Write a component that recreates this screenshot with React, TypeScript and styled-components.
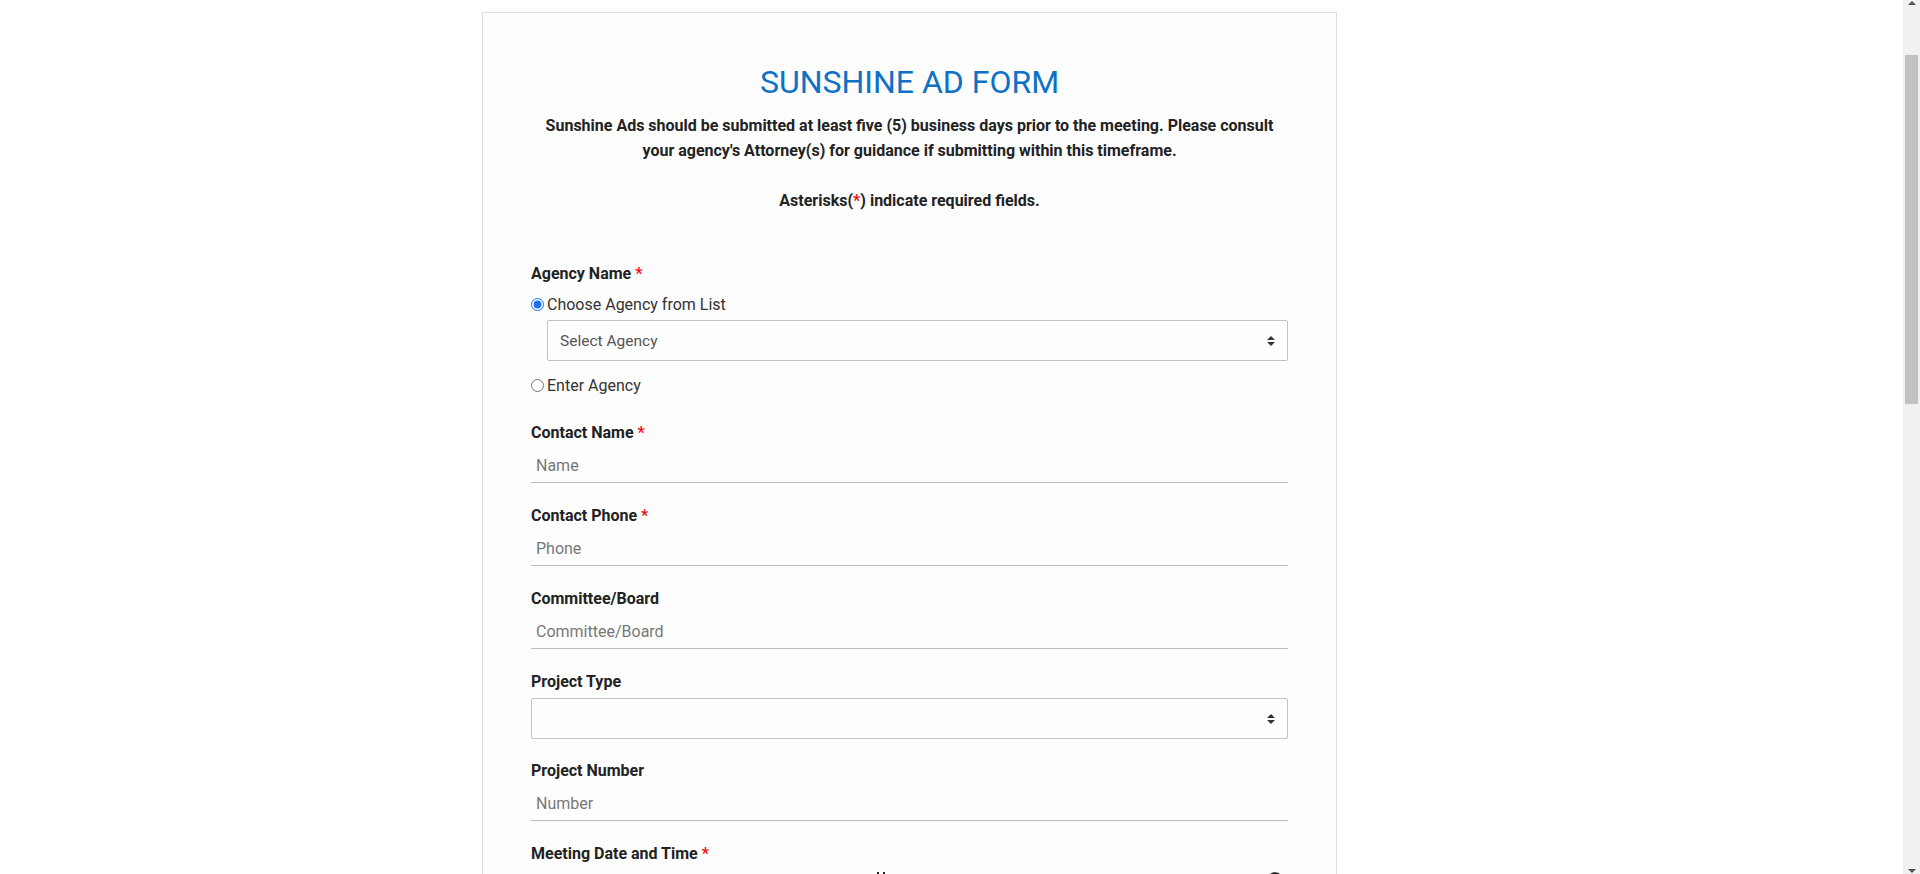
import React from "react";
import styled, { createGlobalStyle } from "styled-components";
import { FaRegCalendarAlt, FaClock } from "react-icons/fa";

const Global = createGlobalStyle`
  html, body { margin: 0; padding: 0; background: #ffffff; }
  body { font-family: Roboto, "Liberation Sans", Arial, sans-serif; color: #222; }
  * { box-sizing: border-box; }
`;

const Page = styled.div`
  display: flex;
  justify-content: center;
  padding: 12px 17px 60px 0;
`;

const Card = styled.div`
  width: 855px;
  margin-right: 84px;
  background: #fdfdfd;
  border: 1px solid #dedee2;
  padding: 50px 48px 48px;
`;

const Title = styled.h1`
  margin: 0;
  font-size: 32px;
  line-height: 38px;
  font-weight: 400;
  color: #0f71c6;
  text-align: center;
`;

const Intro = styled.p`
  margin: 12px 0 0;
  font-size: 16px;
  line-height: 25px;
  font-weight: 700;
  color: #222;
  text-align: center;
`;

const Req = styled.span`
  color: #ee1111;
`;

const Form = styled.form`
  margin-top: 50px;
  display: flex;
  flex-direction: column;
`;

const Group = styled.div<{ $mb?: number }>`
  display: flex;
  flex-direction: column;
  margin-bottom: ${(p) => p.$mb ?? 22}px;
`;

const Label = styled.label<{ $mb?: number }>`
  font-size: 16px;
  font-weight: 700;
  line-height: 21px;
  color: #222;
  margin-bottom: ${(p) => p.$mb ?? 5}px;
`;

const RadioRow = styled.label<{ $mt: number }>`
  display: flex;
  align-items: center;
  height: 24px;
  margin-top: ${(p) => p.$mt}px;
  font-size: 16px;
  color: #333;
  cursor: pointer;
`;

const Radio = styled.input.attrs({ type: "radio" })`
  width: 13px;
  height: 13px;
  margin: 0 3px 0 0;
  accent-color: #1a73e8;
`;

const SelectWrap = styled.div<{ $indent?: number; $mt?: number }>`
  position: relative;
  margin-left: ${(p) => p.$indent ?? 0}px;
  margin-top: ${(p) => p.$mt ?? 0}px;
`;

const Select = styled.select`
  appearance: none;
  -webkit-appearance: none;
  width: 100%;
  height: 41px;
  border: 1px solid #c2c2c2;
  border-radius: 2px;
  background: #fefefe;
  padding: 0 30px 0 12px;
  font-family: Roboto, "Liberation Sans", Arial, sans-serif;
  font-size: 15.5px;
  color: #555;
  outline: none;
`;

const Arrows = styled.svg`
  position: absolute;
  right: 13px;
  top: 50%;
  transform: translateY(-50%);
  pointer-events: none;
`;

const TextInput = styled.input`
  width: 100%;
  height: 35px;
  border: none;
  border-bottom: 1px solid #bdbdbd;
  background: #fefefe;
  padding: 0 5px;
  font-family: Roboto, "Liberation Sans", Arial, sans-serif;
  font-size: 16px;
  color: #333;
  outline: none;
  &::placeholder { color: #777; }
`;

const TextArea = styled.textarea`
  width: 100%;
  height: 160px;
  border: 1px solid #c2c2c2;
  border-radius: 2px;
  background: #fefefe;
  padding: 8px;
  font-family: Roboto, "Liberation Sans", Arial, sans-serif;
  font-size: 16px;
  resize: vertical;
  outline: none;
  &::placeholder { color: #777; }
`;

const Pair = styled.div`
  display: grid;
  grid-template-columns: 1fr 1fr;
  column-gap: 31px;
`;

const IconField = styled.div`
  position: relative;
`;

const FieldIcon = styled.span`
  position: absolute;
  right: 5px;
  top: 3px;
  display: flex;
  color: #222;
  font-size: 16px;
  pointer-events: none;
`;

const Note = styled.p`
  margin: 0;
  font-size: 14px;
  line-height: 20px;
  color: #555;
`;

const CheckRow = styled.label`
  display: flex;
  align-items: flex-start;
  gap: 8px;
  font-size: 15px;
  line-height: 22px;
  color: #333;
`;

const SubmitRow = styled.div`
  display: flex;
  justify-content: center;
  margin-top: 12px;
`;

const Submit = styled.button`
  background: #0f71c6;
  color: #fff;
  border: none;
  border-radius: 3px;
  padding: 10px 36px;
  font-family: Roboto, "Liberation Sans", Arial, sans-serif;
  font-size: 16px;
  font-weight: 500;
`;

/* imitation of the browser's classic scrollbar, drawn over the page edge */
const ScrollTrack = styled.div`
  position: fixed;
  top: 0;
  right: 0;
  width: 17px;
  height: 100vh;
  background: #f1f1f1;
  z-index: 10;
`;

const ScrollThumb = styled.div`
  position: absolute;
  top: 55px;
  left: 2px;
  right: 2px;
  height: 349px;
  background: #c1c1c1;
`;

const ScrollArrow = styled.svg<{ $bottom?: boolean }>`
  position: absolute;
  left: 5px;
  ${(p) => (p.$bottom ? "bottom: 1px;" : "top: 1px;")}
`;

const SelectArrows = () => (
  <Arrows width="8" height="10" viewBox="0 0 8 10">
    <path d="M4 0 L8 4 L0 4 Z" fill="#333" />
    <path d="M0 6 L8 6 L4 10 Z" fill="#333" />
  </Arrows>
);

const TextField = ({ label, placeholder, required }: { label: string; placeholder: string; required?: boolean }) => (
  <Group>
    <Label>
      {label}
      {required && <Req> *</Req>}
    </Label>
    <TextInput placeholder={placeholder} />
  </Group>
);

const AreaField = ({ label, placeholder, required }: { label: string; placeholder: string; required?: boolean }) => (
  <Group>
    <Label>
      {label}
      {required && <Req> *</Req>}
    </Label>
    <TextArea placeholder={placeholder} />
  </Group>
);

export default function App() {
  return (
    <>
      <Global />
      <ScrollTrack>
        <ScrollArrow width="8" height="4" viewBox="0 0 8 4">
          <path d="M4 0 L8 4 L0 4 Z" fill="#505050" />
        </ScrollArrow>
        <ScrollThumb />
        <ScrollArrow $bottom width="8" height="4" viewBox="0 0 8 4">
          <path d="M0 0 L8 0 L4 4 Z" fill="#505050" />
        </ScrollArrow>
      </ScrollTrack>
      <Page>
        <Card>
          <Title>SUNSHINE AD FORM</Title>
          <Intro>
            Sunshine Ads should be submitted at least five (5) business days prior to the meeting. Please consult
            <br />
            your agency's Attorney(s) for guidance if submitting within this timeframe.
            <br />
            <br />
            Asterisks(<Req>*</Req>) indicate required fields.
          </Intro>

          <Form onSubmit={(e) => e.preventDefault()}>
            <Group $mb={25}>
              <Label $mb={3}>
                Agency Name<Req> *</Req>
              </Label>
              <RadioRow $mt={5}>
                <Radio name="agency" defaultChecked />
                Choose Agency from List
              </RadioRow>
              <SelectWrap $indent={16} $mt={4}>
                <Select defaultValue="">
                  <option value="">Select Agency</option>
                </Select>
                <SelectArrows />
              </SelectWrap>
              <RadioRow $mt={12}>
                <Radio name="agency" />
                Enter Agency
              </RadioRow>
            </Group>

            <TextField label="Contact Name" placeholder="Name" required />
            <TextField label="Contact Phone" placeholder="Phone" required />
            <TextField label="Committee/Board" placeholder="Committee/Board" />

            <Group $mb={21}>
              <Label $mb={6}>Project Type</Label>
              <SelectWrap>
                <Select defaultValue="">
                  <option value=""></option>
                </Select>
                <SelectArrows />
              </SelectWrap>
            </Group>

            <TextField label="Project Number" placeholder="Number" />

            <Group>
              <Label>
                Meeting Date and Time<Req> *</Req>
              </Label>
              <Pair>
                <IconField>
                  <TextInput placeholder="Date" />
                  <FieldIcon>
                    <FaRegCalendarAlt />
                  </FieldIcon>
                </IconField>
                <IconField>
                  <TextInput placeholder="Time" />
                  <FieldIcon>
                    <FaClock />
                  </FieldIcon>
                </IconField>
              </Pair>
            </Group>

            <TextField label="Meeting Location" placeholder="Location" required />
            <TextField label="Street Address" placeholder="Address" required />
            <TextField label="City" placeholder="City" required />
            <TextField label="Zip Code" placeholder="Zip" />

            <Group>
              <Label>Meeting Type</Label>
              <RadioRow $mt={0}>
                <Radio name="mtype" defaultChecked />
                Regular Meeting
              </RadioRow>
              <RadioRow $mt={4}>
                <Radio name="mtype" />
                Special Meeting
              </RadioRow>
              <RadioRow $mt={4}>
                <Radio name="mtype" />
                Emergency Meeting
              </RadioRow>
            </Group>

            <AreaField label="Purpose of Meeting" placeholder="Purpose" required />
            <TextField label="Contact Email" placeholder="Email" required />
            <AreaField label="Additional Information" placeholder="Additional Information" />

            <Group>
              <Label>Attachments</Label>
              <Note>Accepted file types: PDF, DOC, DOCX. Maximum size 10 MB.</Note>
            </Group>

            <Group>
              <CheckRow>
                <input type="checkbox" />
                I certify that the information provided above is accurate and complete.
              </CheckRow>
            </Group>

            <SubmitRow>
              <Submit type="submit">Submit</Submit>
            </SubmitRow>
          </Form>
        </Card>
      </Page>
    </>
  );
}
